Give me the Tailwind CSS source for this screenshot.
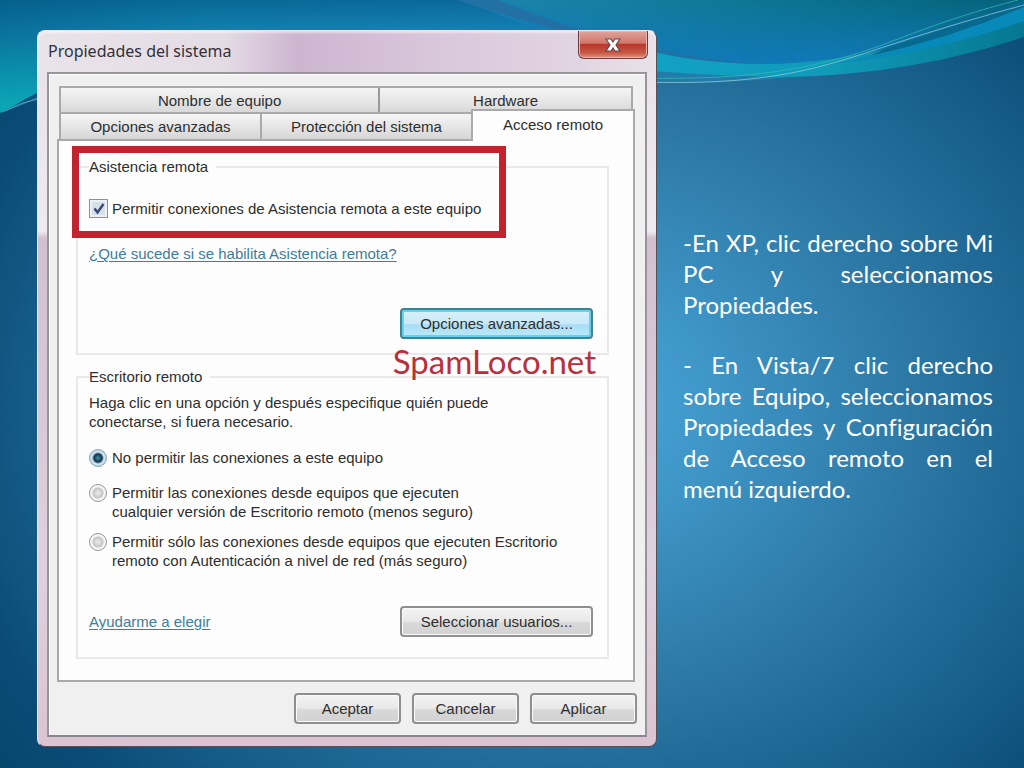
<!DOCTYPE html>
<html lang="es">
<head>
<meta charset="utf-8">
<meta name="viewport" content="width=device-width, initial-scale=1">
<title>Propiedades del sistema</title>
<script src="https://cdn.jsdelivr.net/npm/@tailwindcss/browser@4"></script>
</head>
<body class="relative min-h-screen bg-[#04456a] bg-[radial-gradient(ellipse_66%_74%_at_56%_53%,#4ba6da_0%,#3f97c8_20%,#2b76a3_52%,#145a86_82%,#0a4c76_94%,#04456a_110%)] font-['Liberation_Sans',Arial,sans-serif] text-[15px] leading-[19px] text-[#2e2e2e]">

<!-- Decorative waves -->
<svg class="absolute inset-x-0 top-0 h-[130px] w-full" viewBox="0 0 1024 130" preserveAspectRatio="none" aria-hidden="true">
  <defs>
    <linearGradient id="sky" x1="0" x2="1" y1="0" y2="0"><stop offset="0" stop-color="#0a709c"/><stop offset=".2" stop-color="#1180ac"/><stop offset=".45" stop-color="#1481b4"/><stop offset=".7" stop-color="#1278b2"/><stop offset="1" stop-color="#086a90"/></linearGradient>
    <linearGradient id="shade" gradientUnits="userSpaceOnUse" x1="0" x2="0" y1="0" y2="30"><stop offset="0" stop-color="#00507f" stop-opacity=".5"/><stop offset="1" stop-color="#00507f" stop-opacity="0"/></linearGradient>
    <linearGradient id="teal" x1="0" x2="1" y1="0" y2="0"><stop offset="0" stop-color="#1a84aa"/><stop offset=".5" stop-color="#0d7592"/><stop offset="1" stop-color="#046179"/></linearGradient>
    <linearGradient id="deep" x1="0" x2="0" y1="0" y2="1"><stop offset="0" stop-color="#1079b8" stop-opacity="0"/><stop offset="1" stop-color="#1079b8"/></linearGradient>
    <linearGradient id="left" gradientUnits="userSpaceOnUse" x1="0" x2="0" y1="30" y2="105"><stop offset="0" stop-color="#0ba6b6" stop-opacity="0"/><stop offset="1" stop-color="#0ba6b6"/></linearGradient>
    <linearGradient id="cyan" x1="0" x2="1" y1="0" y2="0"><stop offset="0" stop-color="#12a2c6"/><stop offset=".5" stop-color="#0f9ab8"/><stop offset="1" stop-color="#067791"/></linearGradient>
  </defs>
  <path fill="url(#sky)" d="M0 0H1024V20C900 60 780 78 658 70L60 85Q30 97 0 113Z"/>
  <path fill="url(#shade)" d="M0 0H460L540 30H0Z"/>
  <path fill="url(#left)" d="M0 30H120V80H60Q30 97 0 113Z"/>
  <path fill="#0e507e" d="M10 109Q25 98 38 93V100Q20 104 10 109Z"/>
  <path fill="none" stroke="#4fa7c2" stroke-width=".8" d="M5 111Q20 102 40 99M2 112Q20 105 40 97"/>
  <path fill="url(#teal)" d="M500 0H1024C960 25 860 64 770 64C690 64 590 32 500 0Z"/>
  <path fill="url(#deep)" d="M500 0H1024C960 25 860 64 770 64C690 64 590 32 500 0Z"/>
  <path fill="#2371a4" d="M458 0H498C570 29 650 54 755 64Q700 62 658 52C590 40 520 21 458 0Z"/>
  <path fill="#227ba8" d="M650 68L800 76Q730 85 650 82Z"/>
  <path fill="url(#cyan)" d="M640 49Q700 64 765 64C850 63 940 38 1024 8V37C960 58 880 76 780 77Q710 76 640 70Z"/>
  <path fill="#0789b9" d="M832 64C900 53 960 32 1024 7V21Q930 54 832 64Z"/>
  <path fill="#08698f" d="M885 49Q960 25 1024 0V7Q950 38 870 56Z"/>
  <path fill="none" stroke="#2fb8b5" stroke-width=".8" d="M640 78C760 81 830 65 890 42S980 10 1018 0"/>
  <path fill="none" stroke="#8bc9d8" stroke-width=".8" d="M640 82C770 86 820 68 890 45Q960 22 1024 5"/>
</svg>

<main class="relative flex min-h-screen items-start gap-[26px] pt-[30px] pr-[31px] pb-[22px] pl-[37px]">

  <section aria-labelledby="window-title" class="min-w-0 flex-1 rounded-lg border border-[#56505b] border-t-[#eee4ed] border-l-[#eee4ed] bg-[linear-gradient(#e8e1e8_0%,#efeaf0_28%,#d2c0d0_29%,#dfd1de_75%,#dcc4d2_100%)] px-[9px] pb-[9px]">
    <header class="-mx-[9px] flex h-[41px] items-start justify-between rounded-t-lg bg-[linear-gradient(90deg,#e9e4e9_0%,#e4dce5_30%,#cdb5d0_42%,#d8c5da_62%,#e2d5e2_88%,#e8e2e8_100%)] pr-2 pl-[10px] shadow-[inset_0_2px_2px_#ffffff80]">
      <h1 id="window-title" class="pt-2 font-['Noto_Sans',sans-serif] text-base leading-6 text-[#34303a]">Propiedades del sistema</h1>
      <button type="button" aria-label="Cerrar" class="grid h-7 w-[70px] place-items-center rounded-b-md border border-t-0 border-[#6b3a42] bg-[linear-gradient(#e0a49b_0%,#d0776b_45%,#b8382c_50%,#c65743_80%,#df9580_100%)] shadow-[inset_0_0_0_1px_#edb5a8]">
        <svg class="h-4 w-4" viewBox="0 0 16 16" aria-hidden="true"><path d="M1 2h5l2 3 2-3h5l-4 6 4 6h-5l-2-3-2 3H1l4-6Z" fill="#fff" stroke="#69434a" stroke-width="1.2"/></svg>
      </button>
    </header>

    <div class="border-2 border-[#99939c] border-b-[#8a8490] bg-[#f0f0f0] px-2 pt-3 pb-[11px] shadow-[inset_1px_1px_0_#fff]">
      <div role="tablist" class="mr-1 ml-[2px] text-center">
        <div class="flex h-[26px] border-2 border-b-0 border-[#aaa] bg-linear-to-b from-[#f5f5f5] to-[#d9d9d9]">
          <button type="button" role="tab" class="w-[56%] border-r-2 border-[#999]">Nombre de equipo</button>
          <button type="button" role="tab" class="flex-1">Hardware</button>
        </div>
        <div class="flex h-[27px] items-end">
          <button type="button" role="tab" class="h-[27px] w-[203px] border-2 border-b-0 border-[#aaa] bg-linear-to-b from-[#f6f6f6] to-[#d6d6d6]">Opciones avanzadas</button>
          <button type="button" role="tab" class="h-[27px] w-[209px] border-t-2 border-[#aaa] bg-linear-to-b from-[#f6f6f6] to-[#d6d6d6]">Protección del sistema</button>
          <button type="button" role="tab" aria-selected="true" class="z-10 -mr-[2px] -mb-[2px] h-8 flex-1 border-2 border-b-0 border-[#aaa] bg-[#fdfdfd] pb-1">Acceso remoto</button>
        </div>
      </div>

      <div role="tabpanel" class="mr-[2px] border-2 border-[#a9a9a9] bg-[#fdfdfd] pt-4 pr-[24px] pb-[21px] pl-[17px]">
        <div class="relative">
          <div class="pointer-events-none absolute -top-[11px] -left-[4px] h-[92px] w-[434px] border-[7px] border-[#c1242f]" aria-hidden="true"></div>
          <fieldset class="h-[198px] border-2 border-[#e9e9e9] pr-[14px] pl-[11px]">
            <legend class="pr-2">Asistencia remota</legend>
            <label class="mt-[23px] flex items-center gap-1">
              <span class="grid h-[19px] w-[19px]">
                <input type="checkbox" checked class="col-start-1 row-start-1 h-full w-full appearance-none border border-[#8b9297] bg-[#d6e0e8] shadow-[inset_0_0_0_2px_#eef1f3]">
                <svg class="pointer-events-none z-10 col-start-1 row-start-1 m-auto h-3 w-3" viewBox="0 0 12 12" fill="none" stroke="#344a76" stroke-width="2.4" aria-hidden="true"><path d="M1.5 5.5l3 4L10.500 1"/></svg>
              </span>
              Permitir conexiones de Asistencia remota a este equipo
            </label>
            <p class="mt-[26px]"><a href="#asistencia" class="text-[#3f7d9c] underline underline-offset-2">¿Qué sucede si se habilita Asistencia remota?</a></p>
            <div class="mt-[45px] flex justify-end">
              <button type="button" class="h-[31px] w-[193px] rounded-[4px] border-2 border-[#45808f] bg-[linear-gradient(#d9f0fa_0%,#c9e9f8_50%,#a9dcf6_55%,#bceaf9_100%)] shadow-[inset_0_0_0_2px_#62d3ed]">Opciones avanzadas...</button>
            </div>
          </fieldset>
          <p class="absolute right-[13px] -bottom-[23px] z-10 font-['Lato',sans-serif] text-[33px] leading-[34px] text-[#b92f3e]">SpamLoco.net</p>
        </div>

        <fieldset class="mt-3 border-2 border-[#e9e9e9] pr-[14px] pb-5 pl-[11px]">
          <legend class="pr-2">Escritorio remoto</legend>
          <p class="mt-[7px]">Haga clic en una opción y después especifique quién puede<br>conectarse, si fuera necesario.</p>
          <div class="mt-[17px] flex flex-col gap-4">
            <label class="flex items-start gap-[5px]">
              <input type="radio" name="remoto" checked class="mt-px h-[18px] w-[18px] shrink-0 appearance-none rounded-full border border-[#8ba9bc] bg-[radial-gradient(circle,#3f91a8_0,#16304d_4px,#d7eaf3_6px,#b3d3e4_8px)]">
              No permitir las conexiones a este equipo
            </label>
            <label class="flex items-start gap-[5px]">
              <input type="radio" name="remoto" class="mt-px h-[18px] w-[18px] shrink-0 appearance-none rounded-full border border-[#999] bg-[radial-gradient(circle,#ededed_0,#c4c4c4_5px,#f4f4f4_6px)]">
              <span>Permitir las conexiones desde equipos que ejecuten<br>cualquier versión de Escritorio remoto (menos seguro)</span>
            </label>
            <label class="-mt-[5px] flex items-start gap-[5px]">
              <input type="radio" name="remoto" class="mt-px h-[18px] w-[18px] shrink-0 appearance-none rounded-full border border-[#999] bg-[radial-gradient(circle,#ededed_0,#c4c4c4_5px,#f4f4f4_6px)]">
              <span>Permitir sólo las conexiones desde equipos que ejecuten Escritorio<br>remoto con Autenticación a nivel de red (más seguro)</span>
            </label>
          </div>
          <div class="mt-9 flex items-center justify-between">
            <a href="#ayuda" class="text-[#3f7d9c] underline underline-offset-2">Ayudarme a elegir</a>
            <button type="button" class="h-[31px] w-[193px] rounded-[4px] border-2 border-[#8f8f8f] bg-[linear-gradient(#f3f3f3_0%,#e9e9e9_48%,#d8d8d8_55%,#d2d2d2_100%)] shadow-[inset_0_0_0_1px_#fafafa]">Seleccionar usuarios...</button>
          </div>
        </fieldset>
      </div>

      <div class="mt-[11px] flex justify-end gap-[11px]">
        <button type="button" class="h-[31px] w-[107px] rounded-[4px] border-2 border-[#8f8f8f] bg-[linear-gradient(#f3f3f3_0%,#e9e9e9_48%,#d8d8d8_55%,#d2d2d2_100%)] shadow-[inset_0_0_0_1px_#fafafa]">Aceptar</button>
        <button type="button" class="h-[31px] w-[107px] rounded-[4px] border-2 border-[#8f8f8f] bg-[linear-gradient(#f3f3f3_0%,#e9e9e9_48%,#d8d8d8_55%,#d2d2d2_100%)] shadow-[inset_0_0_0_1px_#fafafa]">Cancelar</button>
        <button type="button" class="h-[31px] w-[107px] rounded-[4px] border-2 border-[#8f8f8f] bg-[linear-gradient(#f3f3f3_0%,#e9e9e9_48%,#d8d8d8_55%,#d2d2d2_100%)] shadow-[inset_0_0_0_1px_#fafafa]">Aplicar</button>
      </div>
    </div>
  </section>

  <aside class="mt-[197px] w-[310px] shrink-0 text-justify font-['Lato',sans-serif] text-2xl leading-[31px] text-white [font-variant-ligatures:none]">
    <p>-En XP, clic derecho sobre Mi PC y seleccionamos Propiedades.</p>
    <p class="mt-[29px]">- En Vista/7 clic derecho sobre&nbsp;Equipo, seleccionamos Propiedades y Configuración de Acceso remoto en el menú&nbsp;izquierdo.</p>
  </aside>
</main>
</body>
</html>
